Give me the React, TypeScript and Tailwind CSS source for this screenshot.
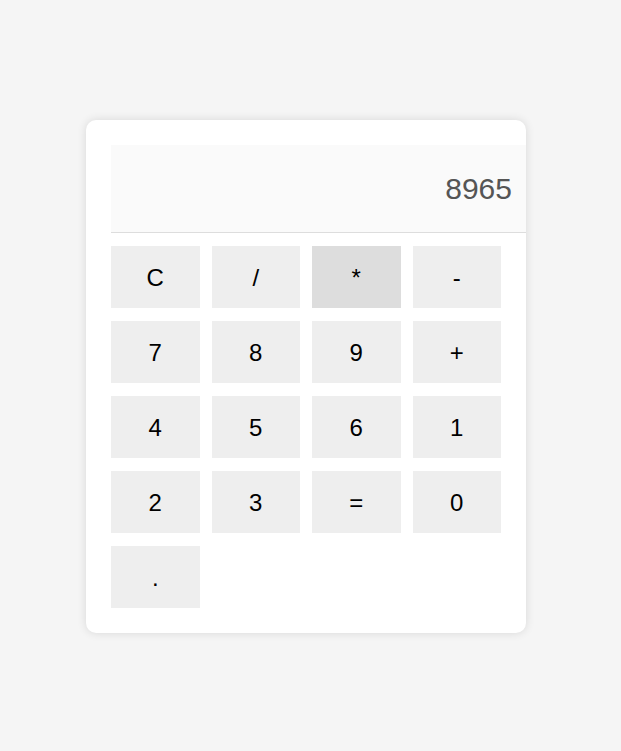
import React from "react";

const keys = ["C", "/", "*", "-", "7", "8", "9", "+", "4", "5", "6", "1", "2", "3", "=", "0", "."];

export default function App() {
  return (
    <div
      className="min-h-screen bg-[#f5f5f5] flex justify-center items-start pt-[120px] pr-[9px]"
      style={{ fontFamily: '"Liberation Sans", Arial, sans-serif' }}
    >
      <div className="w-[440px] bg-white rounded-[10px] p-[25px] shadow-[0_0_10px_rgba(0,0,0,0.12)]">
        <div className="w-[415px] h-[88px] bg-[#fafafa] border-b border-[#dddddd] flex items-center justify-end pr-[14px] text-[30px] text-[#555555] mb-[13px]">
          8965
        </div>
        <div className="grid grid-cols-4 gap-x-[12px] gap-y-[13px]">
          {keys.map((k) => (
            <button
              key={k}
              className={`h-[62px] flex items-center justify-center pt-[2px] text-[24px] text-black ${
                k === "*" ? "bg-[#dddddd]" : "bg-[#eeeeee]"
              }`}
            >
              {k}
            </button>
          ))}
        </div>
      </div>
    </div>
  );
}
